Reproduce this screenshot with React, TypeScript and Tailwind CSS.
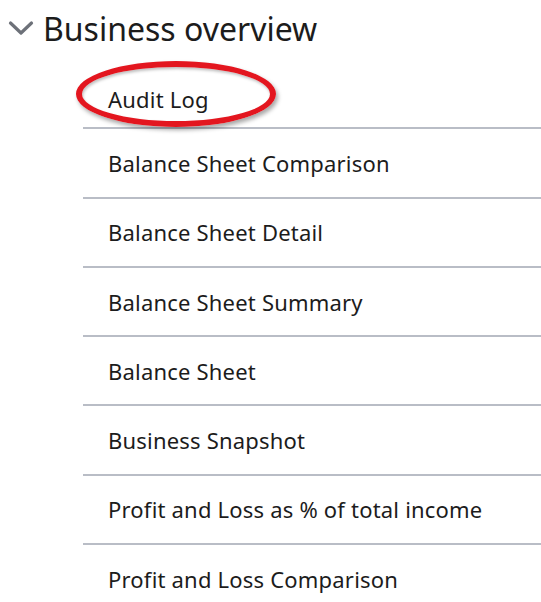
import React from "react";

const items = [
  "Audit Log",
  "Balance Sheet Comparison",
  "Balance Sheet Detail",
  "Balance Sheet Summary",
  "Balance Sheet",
  "Business Snapshot",
  "Profit and Loss as % of total income",
  "Profit and Loss Comparison",
];

export default function App() {
  return (
    <div
      className="w-[541px] h-[602px] bg-white overflow-hidden text-[#1c1c1c]"
      style={{ fontFamily: "'Noto Sans', sans-serif" }}
    >
      <div className="flex items-center h-[60px] pl-[8px] pb-[2px]">
        <svg width="26" height="16" viewBox="0 0 26 16" className="mr-[9px] mt-[-2px]">
          <path d="M2.5 3 L13 13 L23.5 3" fill="none" stroke="#6d7179" strokeWidth="3.2" strokeLinecap="round" strokeLinejoin="round" />
        </svg>
        <span className="text-[32px] leading-none">Business overview</span>
      </div>
      <div className="ml-[83px] flex flex-col">
        {items.map((t, i) => (
          <div
            key={t}
            className={
              "relative h-[69.3px] flex items-center pl-[25px] border-b-2 border-[#b9bdc6] shrink-0 " +
              (i === 0 ? "pt-[10px]" : "")
            }
          >
            {i === 0 && (
              <div
                className="absolute left-[-7px] top-[1px] w-[200px] h-[66px] rounded-[50%] border-[6px] border-[#e3161f]"
                style={{ boxShadow: "2px 3px 4px rgba(0,0,0,0.35), inset 1px 2px 3px rgba(0,0,0,0.25)" }}
              />
            )}
            <span className="text-[22px] leading-none tracking-[0.2px] relative">{t}</span>
          </div>
        ))}
      </div>
    </div>
  );
}
